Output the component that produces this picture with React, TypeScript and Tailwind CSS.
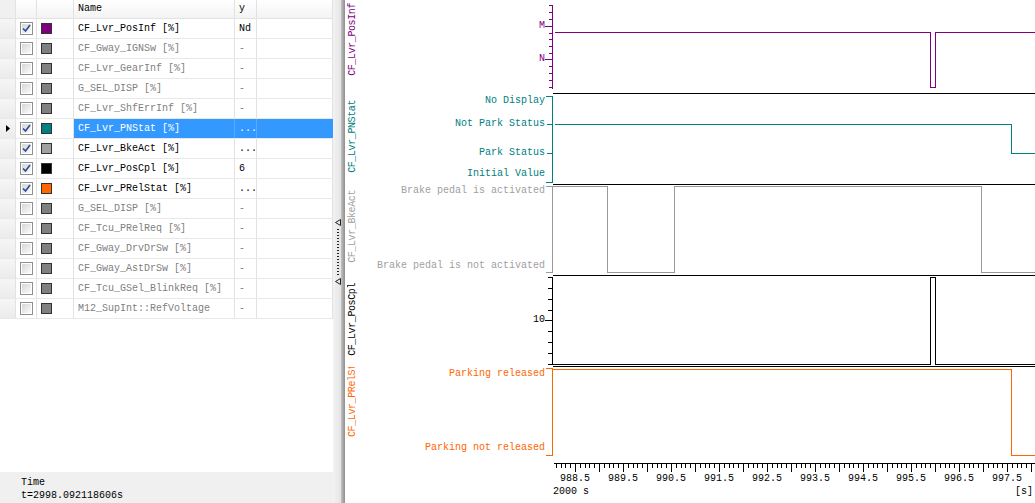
import React from "react";

const rows = [
  { name: "CF_Lvr_PosInf [%]", val: "Nd", on: true, sw: "bg-[#800080]" },
  { name: "CF_Gway_IGNSw [%]", val: "-", on: false, sw: "bg-[#808080]" },
  { name: "CF_Lvr_GearInf [%]", val: "-", on: false, sw: "bg-[#808080]" },
  { name: "G_SEL_DISP [%]", val: "-", on: false, sw: "bg-[#808080]" },
  { name: "CF_Lvr_ShfErrInf [%]", val: "-", on: false, sw: "bg-[#808080]" },
  { name: "CF_Lvr_PNStat [%]", val: "...", on: true, sw: "bg-[#008080]", sel: true },
  { name: "CF_Lvr_BkeAct [%]", val: "...", on: true, sw: "bg-[#a0a0a0]" },
  { name: "CF_Lvr_PosCpl [%]", val: "6", on: true, sw: "bg-black" },
  { name: "CF_Lvr_PRelStat [%]", val: "...", on: true, sw: "bg-[#ff6600]" },
  { name: "G_SEL_DISP [%]", val: "-", on: false, sw: "bg-[#808080]" },
  { name: "CF_Tcu_PRelReq [%]", val: "-", on: false, sw: "bg-[#808080]" },
  { name: "CF_Gway_DrvDrSw [%]", val: "-", on: false, sw: "bg-[#808080]" },
  { name: "CF_Gway_AstDrSw [%]", val: "-", on: false, sw: "bg-[#808080]" },
  { name: "CF_Tcu_GSel_BlinkReq [%]", val: "-", on: false, sw: "bg-[#808080]" },
  { name: "M12_SupInt::RefVoltage", val: "-", on: false, sw: "bg-[#808080]" },
];

function Check({ on }: { on: boolean }) {
  return (
    <div className="w-[13px] h-[13px] border border-[#8f8f8f] bg-white p-px">
      <div className="w-full h-full bg-[linear-gradient(135deg,#d6d6d6,#fbfbfb)] flex items-center justify-center">
        {on && (
          <svg width="9" height="9" viewBox="0 0 9 9">
            <path d="M1 4.5 L3.5 7 L8 1" stroke="#2d4f98" strokeWidth="1.7" fill="none" />
          </svg>
        )}
      </div>
    </div>
  );
}

function SignalTable() {
  return (
    <div className="flex-1 flex flex-col">
      {/* header */}
      <div className="flex h-[19px] bg-[linear-gradient(to_bottom,#ffffff,#f3f3f3)] border-b border-[#e2e2e2]">
        <div className="w-4 border-r border-[#e2e2e2] bg-[#f0f0f0]" />
        <div className="w-[21px] border-r border-[#e2e2e2]" />
        <div className="w-[37px] border-r border-[#e2e2e2]" />
        <div className="w-[161px] border-r border-[#e2e2e2] pl-1 flex items-center text-black">Name</div>
        <div className="w-[22px] border-r border-[#e2e2e2] pl-1 flex items-center text-black">y</div>
        <div className="flex-1 border-r border-[#e2e2e2]" />
      </div>
      {rows.map((r, i) => (
        <div key={i} className="flex h-5 border-b border-[#e8e8e8]">
          <div className="w-4 border-r border-[#e2e2e2] bg-[linear-gradient(to_bottom,#f6f6f6,#ebebeb)] flex items-center justify-center">
            {r.sel && (
              <svg width="4" height="7" viewBox="0 0 4 7">
                <path d="M0 0 L4 3.5 L0 7 Z" fill="#000" />
              </svg>
            )}
          </div>
          <div className="w-[21px] border-r border-[#e2e2e2] flex items-center pl-1">
            <Check on={r.on} />
          </div>
          <div className="w-[37px] border-r border-[#e2e2e2] flex items-center pl-1">
            <div className={`w-[11px] h-[11px] border border-[#333] ${r.sw}`} />
          </div>
          {r.sel ? (
            <>
              <div className="w-[161px] border-r border-[#5aa9ff] bg-[#3399ff] text-white pl-1 flex items-center whitespace-nowrap">{r.name}</div>
              <div className="w-[22px] border-r border-[#5aa9ff] bg-[#3399ff] text-white pl-1 flex items-center">{r.val}</div>
              <div className="flex-1 bg-[#3399ff]" />
            </>
          ) : (
            <>
              <div className={`w-[161px] border-r border-[#e2e2e2] pl-1 flex items-center whitespace-nowrap ${r.on ? "text-black" : "text-[#808080]"}`}>{r.name}</div>
              <div className={`w-[22px] border-r border-[#e2e2e2] pl-1 flex items-center ${r.on ? "text-black" : "text-[#808080]"}`}>{r.val}</div>
              <div className="flex-1 border-r border-[#e2e2e2]" />
            </>
          )}
        </div>
      ))}
      <div className="flex-1" />
      <div className="h-[31px] bg-[#f0f0f0] pl-[21px] pt-[4px] text-black leading-[13px]">
        <div>Time</div>
        <div>t=2998.092118606s</div>
      </div>
    </div>
  );
}

function Splitter() {
  return (
    <div className="w-3 flex flex-col items-center justify-center gap-[3px] bg-[linear-gradient(to_right,#f2f2f2_0%,#e6e6e6_62%,#b9b9b9_72%,#8f8f8f_100%)]">
      <svg width="6" height="7" viewBox="0 0 6 7" className="mr-[3px]">
        <path d="M5.5 0.5 L0.5 3.5 L5.5 6.5 Z" fill="none" stroke="#222" />
      </svg>
      <div className="w-[2px] h-[46px] mr-[3px] bg-[repeating-linear-gradient(to_bottom,#222_0px,#222_1px,transparent_1px,transparent_3px)]" />
      <svg width="6" height="7" viewBox="0 0 6 7" className="mr-[3px]">
        <path d="M5.5 0.5 L0.5 3.5 L5.5 6.5 Z" fill="none" stroke="#222" />
      </svg>
    </div>
  );
}

type Lbl = { t: string; top: string };

function Strip({
  h,
  name,
  nameCls,
  color,
  labels,
  children,
}: {
  h: string;
  name: string;
  nameCls: string;
  color: string;
  labels: Lbl[];
  children: React.ReactNode;
}) {
  return (
    <div className={`flex ${h}`}>
      <div className={`w-[15px] flex flex-col items-center overflow-hidden ${nameCls}`}>
        <span className="[writing-mode:vertical-rl] rotate-180 whitespace-nowrap tracking-[-0.4px]" style={{ color }}>
          {name}
        </span>
      </div>
      <div className="w-[185px] relative">
        {labels.map((l) => (
          <span key={l.t} className={`absolute right-0 whitespace-nowrap ${l.top}`} style={{ color }}>
            {l.t}
          </span>
        ))}
      </div>
      <svg width="490" className="h-full" shapeRendering="crispEdges">
        {children}
      </svg>
    </div>
  );
}

function TimeAxis() {
  const ticks: { x: number; major: boolean }[] = [];
  for (let k = -4; k < 100; k++) {
    const x = Math.round(24 + k * 4.8) + 0.5;
    if (x < 3 || x > 484) continue;
    ticks.push({ x, major: ((k % 5) + 5) % 5 === 0 });
  }
  const labels = ["988.5", "989.5", "990.5", "991.5", "992.5", "993.5", "994.5", "995.5", "996.5", "997.5"];
  return (
    <div className="flex flex-1">
      <div className="w-[206px]" />
      <div className="w-[484px] flex flex-col text-black">
        <svg width="484" height="14" shapeRendering="crispEdges">
          <line x1="3" y1="5.5" x2="484" y2="5.5" stroke="#000" />
          {ticks.map((t) => (
            <line key={t.x} x1={t.x} y1="5" x2={t.x} y2={t.major ? 14 : 10} stroke="#000" />
          ))}
        </svg>
        <div className="flex h-[14px] items-center">
          {labels.map((l) => (
            <div key={l} className="w-12 text-center">{l}</div>
          ))}
        </div>
        <div className="flex justify-between px-[2px] h-3 items-center">
          <span>2000 s</span>
          <span>[s]</span>
        </div>
      </div>
    </div>
  );
}

function Chart() {
  const purpleTicks = [5, 12, 19, 26, 33, 39, 46, 53, 59, 66, 73, 80, 87];
  const blackTicks = [1, 12, 23, 34, 44, 55, 66, 77, 88];
  return (
    <div className="flex-1 flex flex-col bg-white">
      <Strip
        h="h-[94px]"
        name="CF_Lvr_PosInf"
        nameCls="pt-[3px]"
        color="#800080"
        labels={[
          { t: "M", top: "top-[20px]" },
          { t: "N", top: "top-[53px]" },
        ]}
      >
        <line x1="7.5" y1="5" x2="7.5" y2="89" stroke="#800080" />
        {purpleTicks.map((y) => (
          <line key={y} x1={y === 26 || y === 59 ? 0 : 4} y1={y + 0.5} x2="7.5" y2={y + 0.5} stroke="#800080" />
        ))}
        <path d="M10 32.5 H385.5 V87.5 H390.5 V32.5 H490" fill="none" stroke="#800080" />
        <line x1="8" y1="93.5" x2="490" y2="93.5" stroke="#000" />
      </Strip>

      <Strip
        h="h-[91px]"
        name="CF_Lvr_PNStat"
        nameCls="pt-[6px]"
        color="#008080"
        labels={[
          { t: "No Display", top: "top-[1px]" },
          { t: "Not Park Status", top: "top-[24px]" },
          { t: "Park Status", top: "top-[53px]" },
          { t: "Initial Value", top: "top-[74px]" },
        ]}
      >
        <path d="M1 2.5 H7.5 V88.5 H1" fill="none" stroke="#008080" />
        <line x1="2" y1="30.5" x2="7.5" y2="30.5" stroke="#008080" />
        <line x1="2" y1="59.5" x2="7.5" y2="59.5" stroke="#008080" />
        <path d="M10 30.5 H466.5 V59.5 H490" fill="none" stroke="#008080" />
        <line x1="8" y1="90.5" x2="490" y2="90.5" stroke="#000" />
      </Strip>

      <Strip
        h="h-[91px]"
        name="CF_Lvr_BkeAct"
        nameCls="pt-[5px]"
        color="#a0a0a0"
        labels={[
          { t: "Brake pedal is activated", top: "top-0" },
          { t: "Brake pedal is not activated", top: "top-[75px]" },
        ]}
      >
        <path d="M1 1.5 H7.5 V87.5 H1" fill="none" stroke="#999" />
        <path d="M8 1.5 H62.5 V87.5 H129.5 V1.5 H436.5 V87.5 H490" fill="none" stroke="#999" />
        <line x1="8" y1="90.5" x2="490" y2="90.5" stroke="#000" />
      </Strip>

      <Strip
        h="h-[91px]"
        name="CF_Lvr_PosCpl"
        nameCls="pt-[7px]"
        color="#000000"
        labels={[{ t: "10", top: "top-[38px]" }]}
      >
        <line x1="7.5" y1="1" x2="7.5" y2="89" stroke="#000" />
        {blackTicks.map((y) => (
          <line key={y} x1={y === 44 ? 0 : 3} y1={y + 0.5} x2="7.5" y2={y + 0.5} stroke="#000" />
        ))}
        <path d="M8 88.5 H385.5 V1.5 H390.5 V88.5 H490" fill="none" stroke="#000" />
        <line x1="8" y1="90.5" x2="490" y2="90.5" stroke="#000" />
      </Strip>

      <Strip
        h="h-[91px]"
        name="CF_Lvr_PRelStat"
        nameCls="justify-end pb-[21px]"
        color="#ff6600"
        labels={[
          { t: "Parking released", top: "top-[1px]" },
          { t: "Parking not released", top: "top-[75px]" },
        ]}
      >
        <path d="M1 1.5 H7.5 V88.5 H1" fill="none" stroke="#ff6600" />
        <path d="M8 2.5 H466.5 V88.5 H490" fill="none" stroke="#ff6600" />
      </Strip>

      <TimeAxis />
    </div>
  );
}

export default function App() {
  return (
    <div className="w-[1035px] h-[503px] flex overflow-hidden bg-white font-['Liberation_Mono',monospace] text-[10px] leading-[12px]">
      <div className="w-[333px] flex flex-col bg-white">
        <SignalTable />
      </div>
      <Splitter />
      <Chart />
    </div>
  );
}
